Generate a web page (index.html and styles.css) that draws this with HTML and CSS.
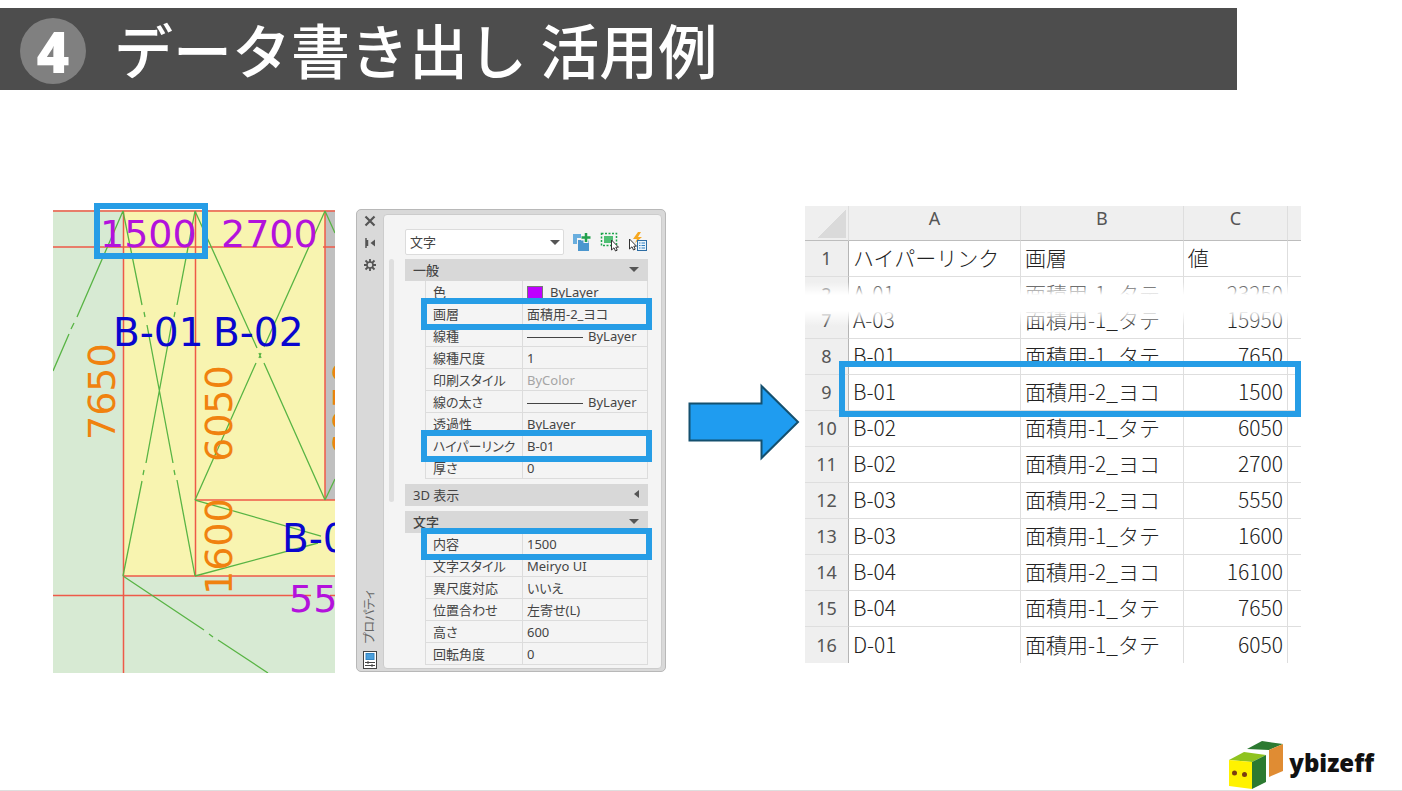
FILE: index.html
```html
<!DOCTYPE html>
<html lang="ja">
<head>
<meta charset="utf-8">
<title>データ書き出し 活用例</title>
<link rel="stylesheet" href="styles.css">
</head>
<body>
<div class="slide">
  <header class="title-bar">
    <span class="badge">4</span>
    <h1 class="title">データ書き出し 活用例</h1>
  </header>

  <main class="stage">
    <svg class="drawing" viewBox="0 0 282 463" role="img" aria-label="図面">
      <defs><clipPath id="frame"><rect width="282" height="463"/></clipPath></defs>
      <g clip-path="url(#frame)">
        <rect class="area-green" width="282" height="463"/>
        <rect class="area-yellow" x="70" y="1" width="212" height="365"/>
        <rect class="area-grey" x="272" y="1" width="10" height="289"/>
        <path class="line-red" d="M0 1H282M0 37H240M270 37H282M142 290H282M70 366H282M0 385.500H258M277 385.500H282M70.500 1V463M142.500 1V366M272 1V290"/>
        <path class="line-green" d="M70 1L24 107M21 113L18 119M16 124L0 161M70 1L89 95M91 102L92 107M94 115L120 253M121 260L122 265M124 270L142 366M142 1L124 95M122 102L121 107M119 112L93 253M91 260L90 265M89 271L70 366M142 1L204 138M206 143L208 148M208 143L206 148M211 153L272 290M272 1L211 137M203 153L142 290M272 1L282 23M272 290L282 269M142 290L268 326M142 366L265 333M273 329H276M70 366L151 420M156 424L160 427M165 430L215 463"/>
        <g class="dim-purple">
          <text x="47" y="37">1500</text>
          <text x="168" y="37">2700</text>
          <text x="236" y="402">5550</text>
        </g>
        <g class="tag-blue">
          <text x="60" y="136">B-01</text>
          <text x="160" y="136">B-02</text>
          <text x="229" y="342">B-03</text>
        </g>
        <g class="dim-orange">
          <text transform="translate(62 230) rotate(-90)">7650</text>
          <text transform="translate(179 252) rotate(-90)">6050</text>
          <text transform="translate(179 385) rotate(-90)">1600</text>
          <text transform="translate(307 247) rotate(-90)">6050</text>
        </g>
      </g>
      <rect class="mark" x="44" y="-4" width="108" height="50"/>
    </svg>

    <section class="palette" aria-label="プロパティ">
      <div class="palette-side">
        <button class="side-button" aria-label="閉じる"><svg width="14" height="14" viewBox="0 0 14 14"><path d="M2.500 2.500L11.500 11.500M11.500 2.500L2.500 11.500" stroke="#555" stroke-width="2.200"/></svg></button>
        <button class="side-button" aria-label="自動的に隠す"><svg width="14" height="14" viewBox="0 0 14 14"><path d="M3 2V12M4.500 4V10" stroke="#555" stroke-width="1.500"/><path d="M12 3.500V10.500L7.500 7Z" fill="#555"/></svg></button>
        <button class="side-button" aria-label="設定"><svg width="14" height="14" viewBox="0 0 14 14"><circle cx="7" cy="7" r="3" fill="none" stroke="#555" stroke-width="1.500"/><path d="M7 1V4M7 10V13M1 7H4M10 7H13M2.500 2.500L5 5M9 9L11.500 11.500M11.500 2.500L9 5M5 9L2.500 11.500" stroke="#555" stroke-width="1.800"/></svg></button>
        <span class="side-title">プロパティ</span>
        <svg class="side-icon" width="14" height="18" viewBox="0 0 14 18"><rect x=".5" y=".5" width="13" height="17" fill="#fff" stroke="#444"/><rect x="3" y="2.500" width="8" height="6" fill="#4a9fdc" stroke="#3484c0"/><path d="M2 11.500H12M2 14.500H12M5 10V13M9 13V16" stroke="#444"/></svg>
      </div>
      <div class="palette-body">
        <div class="scroll-thumb"></div>
        <div class="palette-main">
          <div class="toolbar">
            <div class="picker">
              <select class="picker-select" aria-label="オブジェクトの種類"><option>文字</option></select>
            </div>
            <button class="tool" aria-label="追加"><svg width="20" height="20" viewBox="0 0 20 20"><path d="M1 2H9V6H5V12H1Z" fill="#69aede"/><rect x="6" y="8" width="11" height="11" fill="#4c97cf"/><path d="M14 1V11M9 6H19" stroke="#f4f4f4" stroke-width="5"/><path d="M14 1V10M9.500 5.500H18.500" stroke="#22a04c" stroke-width="2.500"/></svg></button>
            <button class="tool" aria-label="オブジェクトを選択"><svg width="20" height="20" viewBox="0 0 20 20"><rect x="1.500" y="1.500" width="15" height="12" fill="none" stroke="#1ea54c" stroke-width="1.500" stroke-dasharray="2 1.500"/><rect x="4" y="4" width="9" height="7" fill="#4fbf74"/><path d="M11.500 8V18L14 15.800L15.500 19L17.200 18.200L15.800 15.200H18.500Z" fill="#fff" stroke="#333"/></svg></button>
            <button class="tool" aria-label="クイック選択"><svg width="20" height="20" viewBox="0 0 20 20"><path d="M10 0L5 7H9L7 11L14 5H10L13 0Z" fill="#f6a821"/><path d="M1.500 7V17L4 14.800L5.500 18L7.200 17.200L5.800 14.200H8.500Z" fill="#fff" stroke="#333"/><rect x="9.500" y="8.500" width="9" height="10" fill="#eaf4fb" stroke="#2d6da3"/><path d="M11 11H12.500M13.500 11H17M11 13.500H12.500M13.500 13.500H17M11 16H12.500M13.500 16H17" stroke="#2d7fc1"/></svg></button>
          </div>
          <div class="groups">
            <section class="group">
              <button class="group-head group-bold">一般<span class="caret-down"></span></button>
              <table class="props">
                <tr><th>色</th><td><span class="swatch"></span>ByLayer</td></tr>
                <tr class="marked"><th>画層</th><td>面積用-2_ヨコ</td></tr>
                <tr><th>線種</th><td><span class="rule"></span>ByLayer</td></tr>
                <tr><th>線種尺度</th><td>1</td></tr>
                <tr><th>印刷スタイル</th><td class="muted">ByColor</td></tr>
                <tr><th>線の太さ</th><td><span class="rule"></span>ByLayer</td></tr>
                <tr><th>透過性</th><td>ByLayer</td></tr>
                <tr class="marked"><th>ハイパーリンク</th><td>B-01</td></tr>
                <tr><th>厚さ</th><td>0</td></tr>
              </table>
            </section>
            <section class="group">
              <button class="group-head">3D 表示<span class="caret-left"></span></button>
            </section>
            <section class="group">
              <button class="group-head group-bold">文字<span class="caret-down"></span></button>
              <table class="props">
                <tr class="marked"><th>内容</th><td>1500</td></tr>
                <tr><th>文字スタイル</th><td>Meiryo UI</td></tr>
                <tr><th>異尺度対応</th><td>いいえ</td></tr>
                <tr><th>位置合わせ</th><td>左寄せ(L)</td></tr>
                <tr><th>高さ</th><td>600</td></tr>
                <tr><th>回転角度</th><td>0</td></tr>
              </table>
            </section>
          </div>
        </div>
      </div>
    </section>

    <svg class="arrow" viewBox="0 0 112 78" aria-hidden="true"><path d="M1.500 20.500H73.500V3L110 39L73.500 75V57.500H1.500Z" fill="#1f9cf0" stroke="#14506f" stroke-width="2"/></svg>

    <div class="sheet">
      <table class="grid">
        <colgroup><col class="col-no"><col class="col-a"><col class="col-b"><col class="col-c"><col class="col-rest"></colgroup>
        <thead>
          <tr><th class="corner"></th><th>A</th><th>B</th><th>C</th><th></th></tr>
        </thead>
        <tbody>
          <tr><th>1</th><td>ハイパーリンク</td><td>画層</td><td class="left">値</td><td></td></tr>
          <tr class="torn"><th><div class="cut">2</div></th><td><div class="cut">A-01</div></td><td><div class="cut">面積用-1_タテ</div></td><td><div class="cut">23250</div></td><td></td></tr>
          <tr><th>7</th><td>A-03</td><td>面積用-1_タテ</td><td>15950</td><td></td></tr>
          <tr><th>8</th><td>B-01</td><td>面積用-1_タテ</td><td>7650</td><td></td></tr>
          <tr><th>9</th><td>B-01</td><td>面積用-2_ヨコ</td><td>1500</td><td></td></tr>
          <tr><th>10</th><td>B-02</td><td>面積用-1_タテ</td><td>6050</td><td></td></tr>
          <tr><th>11</th><td>B-02</td><td>面積用-2_ヨコ</td><td>2700</td><td></td></tr>
          <tr><th>12</th><td>B-03</td><td>面積用-2_ヨコ</td><td>5550</td><td></td></tr>
          <tr><th>13</th><td>B-03</td><td>面積用-1_タテ</td><td>1600</td><td></td></tr>
          <tr><th>14</th><td>B-04</td><td>面積用-2_ヨコ</td><td>16100</td><td></td></tr>
          <tr><th>15</th><td>B-04</td><td>面積用-1_タテ</td><td>7650</td><td></td></tr>
          <tr><th>16</th><td>D-01</td><td>面積用-1_タテ</td><td>6050</td><td></td></tr>
        </tbody>
      </table>
      <div class="tear"></div>
      <div class="row-mark"></div>
    </div>
  </main>

  <footer class="footer">
    <svg class="logo" width="56" height="50" viewBox="0 0 56 50" aria-hidden="true">
      <path d="M19 9L34 1L55 4L41 10Z" fill="#2c7a31"/>
      <path d="M41 10L55 4V31L41 37Z" fill="#e08c33"/>
      <path d="M1 20L16 12L38 15L24 22Z" fill="#8fc31f"/>
      <path d="M1 20L24 22V49L1 46Z" fill="#fff200"/>
      <path d="M24 22L38 15V42L24 49Z" fill="#2c7a31"/>
      <circle cx="6.500" cy="33" r="2.500" fill="#7a3d10"/><circle cx="16.500" cy="34.500" r="2.500" fill="#7a3d10"/>
    </svg>
    <span class="brand">ybizeff</span>
  </footer>
</div>
</body>
</html>
```
FILE: styles.css
```css
* { box-sizing: border-box; }

body {
  margin: 0;
  background: #fff;
  font-family: "Noto Sans CJK JP", sans-serif;
  color: #333;
}

button {
  border: 0;
  padding: 0;
  background: none;
  font: inherit;
  color: inherit;
}

.slide {
  display: flex;
  flex-direction: column;
  min-height: 100vh;
  padding-top: 8px;
  border-bottom: 1px solid #dedede;
}

/* Title */
.title-bar {
  display: flex;
  align-items: center;
  gap: 28px;
  height: 82px;
  margin-right: 165px;
  padding-left: 20px;
  background: #4d4d4d;
  color: #fff;
}

.badge {
  display: flex;
  align-items: center;
  justify-content: center;
  flex: none;
  width: 66px;
  height: 66px;
  margin-top: 4px;
  border-radius: 50%;
  background: #808080;
  font: 800 56px/66px "Open Sans", sans-serif;
}

.title {
  margin: 0;
  font-size: 59px;
  font-weight: 500;
  line-height: 84px;
  white-space: nowrap;
}

/* Content row */
.stage {
  display: grid;
  grid-template-columns: minmax(0, 303fr) minmax(0, 332fr) minmax(0, 117fr) minmax(0, 496fr);
  align-items: start;
  margin-top: 116px;
  padding: 0 101px 0 53px;
}

/* Drawing */
.drawing {
  display: block;
  width: calc(100% - 21px);
  margin-top: 4px;
  overflow: visible;
  font: 38px "DejaVu Sans", sans-serif;
}

.area-green { fill: #d7ead3; }
.area-yellow { fill: #f8f4b0; }
.area-grey { fill: #c0c0c0; }
.line-red { fill: none; stroke: #ee5a48; stroke-width: 1.5; }
.line-green { fill: none; stroke: #58b444; stroke-width: 1.3; }
.dim-purple { fill: #b312dc; }
.tag-blue { fill: #0a06cf; font-size: 39px; }
.dim-orange { fill: #f0820f; }
.mark { fill: none; stroke: #269de6; stroke-width: 6; }

/* Properties palette */
.palette {
  display: flex;
  height: 463px;
  margin: 3px 22px 0 0;
  padding: 4px 3px 2px 0;
  border: 1px solid #b8b8b8;
  border-radius: 5px;
  background: #d9d9d9;
  font-family: "Noto Sans", "Noto Sans CJK JP", sans-serif;
  font-size: 13px;
  font-feature-settings: "palt";
  color: #444;
}

.palette-side {
  display: flex;
  flex-direction: column;
  align-items: center;
  gap: 8px;
  width: 26px;
}

.side-button { height: 14px; line-height: 0; }

.side-title {
  margin-top: auto;
  writing-mode: vertical-rl;
  text-orientation: sideways;
  transform: rotate(180deg);
  font-size: 12px;
  line-height: 20px;
  color: #666;
}

.palette-body {
  display: flex;
  flex: 1;
  min-width: 0;
  padding: 14px 13px 3px 5px;
  border: 1px solid #ccc;
  border-radius: 4px;
  background: #f4f4f4;
}

.scroll-thumb {
  flex: none;
  width: 5px;
  height: 243px;
  margin: 30px 11px 0 0;
  border-radius: 3px;
  background: #dfdfdf;
}

.palette-main {
  display: flex;
  flex: 1;
  flex-direction: column;
  gap: 4px;
  min-width: 0;
}

.toolbar {
  display: flex;
  align-items: center;
  gap: 8px;
  height: 26px;
}

.picker { position: relative; flex: 1; }

.picker::after {
  content: "";
  position: absolute;
  top: 11px;
  right: 4px;
  border: 5px solid transparent;
  border-top-color: #555;
  border-bottom: 0;
}

.picker-select {
  display: block;
  width: 100%;
  height: 26px;
  padding: 0 4px;
  border: 1px solid #dcdcdc;
  border-radius: 2px;
  appearance: none;
  background: #fff;
  font: inherit;
  color: inherit;
}

.tool { width: 20px; height: 20px; line-height: 0; }

.groups {
  display: flex;
  flex-direction: column;
  gap: 5px;
}

.group-head {
  display: flex;
  align-items: center;
  justify-content: space-between;
  width: 100%;
  height: 22px;
  padding: 0 9px 2px 8px;
  background: #d8d8d8;
}

.group-bold { font-weight: 500; }

.caret-down {
  border: 5px solid transparent;
  border-top-color: #555;
  border-bottom: 0;
}

.caret-left {
  border: 4px solid transparent;
  border-right: 5px solid #555;
  border-left: 0;
}

.props {
  width: calc(100% - 20px);
  margin-left: 20px;
  border-spacing: 0;
  table-layout: fixed;
  border-left: 1px solid #dcdcdc;
  border-right: 1px solid #dcdcdc;
}

.props th,
.props td {
  height: 22px;
  padding: 0 0 0 4px;
  border-bottom: 1px solid #dcdcdc;
  font-weight: 400;
  line-height: 20px;
  text-align: left;
  white-space: nowrap;
}

.props th {
  width: 97px;
  padding-left: 7px;
  border-right: 1px solid #dcdcdc;
}

.props .muted { color: #a5a5a5; }
.marked { outline: 6px solid #269de6; outline-offset: -1px; }

.swatch {
  display: inline-block;
  width: 16px;
  height: 15px;
  margin-right: 7px;
  border: 1px solid #777;
  background: #bf00ff;
  vertical-align: middle;
}

.rule {
  display: inline-block;
  width: 56px;
  height: 1px;
  margin-right: 5px;
  background: #444;
  vertical-align: middle;
}

/* Arrow */
.arrow {
  display: block;
  width: calc(100% - 5px);
  margin-top: 177px;
}

/* Spreadsheet */
.sheet { position: relative; }

.grid {
  width: 100%;
  border-spacing: 0;
  table-layout: fixed;
}

.col-no { width: 44px; }
.col-a { width: 34.7%; }
.col-b { width: 32.8%; }
.col-c { width: 21%; }

.grid th,
.grid td {
  height: 36px;
  padding: 0 4px;
  border-right: 1px solid #dedede;
  border-bottom: 1px solid #dedede;
  line-height: 35px;
  white-space: nowrap;
}

.grid th {
  background: #efefef;
  font-family: "Noto Sans", sans-serif;
  font-size: 18px;
  font-weight: 400;
  color: #555;
}

.grid td {
  padding-bottom: 2px;
  font-size: 21px;
  font-weight: 300;
  line-height: 33px;
  text-align: left;
  color: #222;
}

.grid td:nth-child(4) { text-align: right; }
.grid td.left { text-align: left; }

.grid th:last-child,
.grid td:last-child { border-right: 0; }

.grid thead th {
  height: 35px;
  padding-bottom: 10px;
  border-bottom-color: #bdbdbd;
  line-height: 24px;
}

.grid tbody th { border-right-color: #b5b5b5; }
.grid tbody tr:last-child > * { border-bottom: 0; }

.grid .corner {
  background: linear-gradient(135deg, transparent 50%, #dadada 50%) 12px 4px / 29px 28px no-repeat #efefef;
}

.grid .torn > * { height: 26px; padding-bottom: 0; border-bottom: 0; }
.cut { height: 26px; overflow: hidden; }

.tear {
  position: absolute;
  top: 76px;
  left: 0;
  right: 0;
  height: 44px;
  background: linear-gradient(rgba(255, 255, 255, 0), #fff 13px, #fff 29px, rgba(255, 255, 255, 0));
}

.row-mark {
  position: absolute;
  top: 155px;
  left: 34px;
  right: 0;
  height: 56px;
  border: 6px solid #269de6;
}

/* Footer */
.footer {
  display: flex;
  align-items: center;
  justify-content: flex-end;
  gap: 5px;
  margin-top: auto;
  padding-right: 28px;
}

.logo { display: block; }

.brand {
  font: 900 24px/30px "Noto Sans", sans-serif;
  padding-bottom: 4px;
  color: #111;
}
```
